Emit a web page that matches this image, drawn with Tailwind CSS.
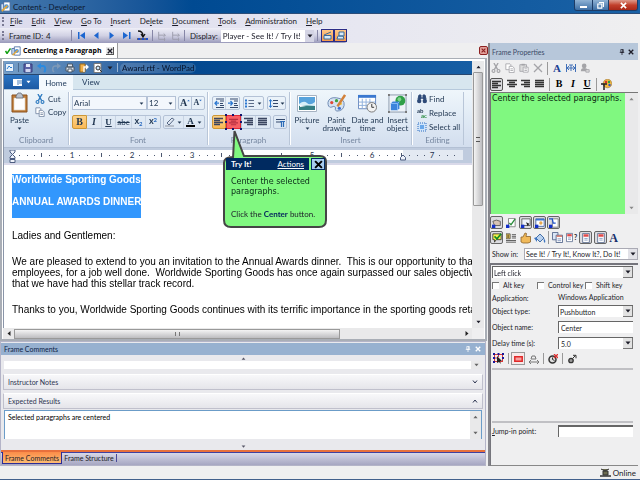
<!DOCTYPE html>
<html lang="en">
<head>
    <meta charset="UTF-8">
    <meta name="viewport" content="width=device-width, initial-scale=1.0">
    <title>Content - Developer</title>
    <script src="https://cdn.jsdelivr.net/npm/@tailwindcss/browser@4"></script>
</head>
<body class="min-h-screen flex flex-col bg-[#efeff0] font-['Lato','Open_Sans',sans-serif] text-[8px] leading-[10px] text-[#1c1c28] overflow-hidden">

    <!-- icon set -->
    <svg class="hidden">
        <symbol id="i-left" viewBox="0 0 10 10"><path d="M0 1.5h9M0 3.5h6M0 5.5h9M0 7.5h6" stroke="currentColor" stroke-width="1.3"/></symbol>
        <symbol id="i-center" viewBox="0 0 10 10"><path d="M0 1.5h10M2 3.5h6M0 5.5h10M2 7.5h6" stroke="currentColor" stroke-width="1.3"/></symbol>
        <symbol id="i-right" viewBox="0 0 10 10"><path d="M0 1.5h9M3 3.5h6M0 5.5h9M3 7.5h6" stroke="currentColor" stroke-width="1.3"/></symbol>
        <symbol id="i-just" viewBox="0 0 10 10"><path d="M0 1.5h9M0 3.5h9M0 5.5h9M0 7.5h9" stroke="currentColor" stroke-width="1.3"/></symbol>
        <symbol id="i-down" viewBox="0 0 6 4"><path d="M.5.5h5L3 3.5z" fill="currentColor"/></symbol>
        <symbol id="i-up" viewBox="0 0 6 4"><path d="M.5 3.5h5L3 .5z" fill="currentColor"/></symbol>
        <symbol id="i-x" viewBox="0 0 8 8"><path d="M1 1l6 6M7 1L1 7" stroke="currentColor" stroke-width="1.8"/></symbol>
        <symbol id="i-pin" viewBox="0 0 8 8"><path d="M2.5.5h3v4h-3zM1 4.500h6M4 4.500V8" fill="none" stroke="currentColor"/><path d="M5 .5v4" stroke="currentColor"/></symbol>
        <symbol id="i-cut" viewBox="0 0 12 12"><path d="M8.500 0L4 8M3.500 0L8 8" stroke="currentColor" stroke-width="1.6"/><circle cx="3" cy="9.500" r="1.700" fill="none" stroke="currentColor" stroke-width="1.400"/><circle cx="9" cy="9.500" r="1.700" fill="none" stroke="currentColor" stroke-width="1.400"/></symbol>
        <symbol id="i-copy" viewBox="0 0 12 12"><path d="M1 1h5l1 1v6H1z" fill="#fff" stroke="currentColor"/><path d="M5 4h4l2 2v5.500H5z" fill="#fff" stroke="currentColor"/><path d="M6.500 7h3M6.500 9h3" stroke="currentColor"/></symbol>
        <symbol id="i-paste" viewBox="0 0 12 12"><path d="M1 2h8v8H1z" fill="#ddd" stroke="currentColor"/><path d="M3 1h4v2H3z" fill="currentColor"/><path d="M5 5h6v6H5z" fill="#fff" stroke="currentColor"/><path d="M6.500 7h3M6.500 9h3" stroke="currentColor"/></symbol>
        <symbol id="i-doc" viewBox="0 0 12 12"><path d="M2 .5h8v11H2z" fill="#fff" stroke="#56688c"/><path d="M3 3h6" stroke="#e04a4a" stroke-width="3"/><path d="M4 6.500h4M4 8.500h4" stroke="#7d93bd"/></symbol>
        <symbol id="i-docs" viewBox="0 0 12 12"><path d="M.5.5h6v8h-6z" fill="#dbe6f6" stroke="#56688c"/><path d="M4.500 3.500h7v8h-7z" fill="#fff" stroke="#56688c"/><path d="M5 4.500h6" stroke="#d66a5a" stroke-width="1.500"/><path d="M6 7.500h4M6 9.500h4" stroke="#7d93bd"/></symbol>
        <symbol id="i-page" viewBox="0 0 12 12"><path d="M3 .5h8v9H3z" fill="#fff" stroke="#4c5c84"/><path d="M5 3h4M5 5h4" stroke="#8aa0c8"/><path d="M2 11l7-7 1.500 1.500L4 12z" fill="#eac36a" stroke="#6d5a2c" stroke-width=".6"/><path d="M0 7h5v5H0z" fill="#1330c8"/></symbol>
        <symbol id="i-hand" viewBox="0 0 12 12"><path d="M1 5h2l2-4 1.500.5L6 4.500h4.500V10L8 11H3L1 10z" fill="#f0b95a" stroke="#8a622a" stroke-width=".8"/></symbol>
        <symbol id="i-tree" viewBox="0 0 12 12"><path d="M2 1v9h8M2 5h8M8 3l2 2-2 2M9 8v4" fill="none" stroke="currentColor" stroke-width="1.100"/></symbol>
        <symbol id="i-frame" viewBox="0 0 12 12"><path d="M1 3h7v7H1z" fill="#cfe2f6" stroke="#44689d"/><path d="M4 1h7v10H4z" fill="#fff" stroke="#44689d"/><circle cx="7" cy="6" r="2.500" fill="#4c93d8"/><path d="M2 11l6-6" stroke="#e6a93a" stroke-width="1.800"/></symbol>
        <symbol id="i-person" viewBox="0 0 12 12"><circle cx="5" cy="3.500" r="2.800" fill="currentColor"/><path d="M1 10q0-4 4-4t5 4z" fill="currentColor"/><path d="M7 8h4v3H7z" fill="#ddd" stroke="currentColor"/></symbol>
    </svg>

    <header>
        <div class="flex h-[14px] items-center bg-linear-to-r from-[#4679ad] via-[#004a92] via-30% to-[#1a62a6] border-b border-[#2b4d79]">
            <svg class="size-[11px] mr-[2px]"><use href="#i-frame"/></svg>
            <h1 class="flex-1 text-[#0c1830]">Content - Developer</h1>
            <div class="self-start flex h-[11px] mr-[2px] rounded-b-[3px] border border-t-0 border-[#1d3c66] overflow-hidden text-white">
                <button aria-label="Minimize" class="w-[18px] bg-linear-to-b from-[#8fb2d4] to-[#3d6fa5] border-r border-[#1d3c66] flex items-center justify-center"><span class="w-[7px] h-[2px] mt-[3px] bg-white"></span></button>
                <button aria-label="Restore" class="w-[16px] bg-linear-to-b from-[#8fb2d4] to-[#3d6fa5] border-r border-[#1d3c66] flex items-center justify-center"><svg class="size-[7px]" viewBox="0 0 7 7"><path d="M2 .5h4.500V5M.8 2h4v4.200h-4z" fill="none" stroke="#fff" stroke-width="1.200"/></svg></button>
                <button aria-label="Close" class="w-[28px] bg-linear-to-b from-[#dc9a8c] via-[#c2402c] to-[#a82818] flex items-center justify-center"><svg class="size-[7px]"><use href="#i-x"/></svg></button>
            </div>
        </div>
        <nav class="flex h-[14px] items-center bg-linear-to-r from-[#dcdcee] via-[#e6e6f1] to-[#efeff0] pl-[2px]">
            <span class="h-[9px] border-l-2 border-dotted border-[#7a7a94] mr-[6px]"></span>
            <div class="flex gap-[9px]">
                <button><u>F</u>ile</button>
                <button><u>E</u>dit</button>
                <button><u>V</u>iew</button>
                <button><u>G</u>o To</button>
                <button><u>I</u>nsert</button>
                <button>De<u>l</u>ete</button>
                <button><u>D</u>ocument</button>
                <button><u>T</u>ools</button>
                <button><u>A</u>dministration</button>
                <button><u>H</u>elp</button>
            </div>
        </nav>
        <div class="flex h-[15px] bg-linear-to-r from-[#e6e6f1] via-[#e6e6f1] to-[#efeff0]">
            <div class="flex items-center w-[347px] pl-[2px] rounded-r-[3px] bg-linear-to-b from-[#eeeef7] via-[#d2d2e4] to-[#9a9abb]">
                <span class="h-[9px] border-l-2 border-dotted border-[#7a7a94] mr-[5px]"></span>
                <span class="w-[37px]">Frame ID:</span><span class="w-[25px]">4</span>
                <span class="h-[11px] border-l border-[#8686a6] mr-[5px]"></span>
                <div class="flex items-center gap-[6px] text-[#1c66d0]">
                    <button aria-label="First frame"><svg class="block size-[9px]" viewBox="0 0 9 9"><path d="M1 1h1.500v7H1zM8 1v7L3 4.500z" fill="currentColor"/></svg></button>
                    <button aria-label="Previous frame"><svg class="block size-[9px]" viewBox="0 0 9 9"><path d="M6.500 1v7L2 4.500z" fill="currentColor"/></svg></button>
                    <button aria-label="Next frame"><svg class="block size-[9px]" viewBox="0 0 9 9"><path d="M2.500 1v7L7 4.500z" fill="currentColor"/></svg></button>
                    <button aria-label="Last frame"><svg class="block size-[9px]" viewBox="0 0 9 9"><path d="M7 1h1.500v7H7zM1 1v7l5-3.500z" fill="currentColor"/></svg></button>
                    <button aria-label="Go to frame"><svg class="block size-[11px]" viewBox="0 0 11 11"><path d="M1 1q5 0 5 5M4 4l2 3 2-3" fill="none" stroke="#111" stroke-width="1.300"/><path d="M0 9h11" stroke="#111"/><path d="M1 8h2v2H1zM5 8h2v2H5zM9 8h2v2H9z" fill="#1c4fd0"/></svg></button>
                </div>
                <span class="h-[11px] border-l border-[#8686a6] mx-[4px]"></span>
                <button aria-label="Jump in" class="text-[#9c9cac]"><svg class="block size-[10px] mr-[4px]"><use href="#i-tree"/></svg></button>
                <button aria-label="Jump out" class="text-[#9c9cac]"><svg class="block size-[10px] mr-[3px]"><use href="#i-tree"/></svg></button>
                <span class="h-[11px] border-l border-[#8686a6] mr-[5px]"></span>
                <label for="display" class="mr-[3px]">Display:</label>
                <div class="relative flex-1 h-[12px] bg-white">
                    <select id="display" class="block appearance-none w-full h-[12px] pl-[2px] outline-none"><option>Player - See It! / Try It!</option></select>
                    <span class="absolute right-0 top-0 h-[12px] w-[9px] bg-[#d4d4e4] flex items-center justify-center pointer-events-none"><svg class="w-[6px] h-[4px]"><use href="#i-down"/></svg></span>
                </div>
                <span class="h-[11px] border-l border-[#8686a6] mx-[3px]"></span>
                <button aria-label="Show recording bar" class="size-[13px] p-[1px] border border-[#2c2c86] bg-linear-to-b from-[#ffc888] to-[#f5994a]"><svg class="block size-[9px]" viewBox="0 0 9 9"><path d="M1 4l7-3M1 4.500h7V8H1z" fill="#d7ebfa" stroke="#3c6c9c"/></svg></button>
                <button aria-label="Show bubble" class="size-[13px] p-[1px] border border-[#2c2c86] bg-linear-to-b from-[#ffc888] to-[#f5994a]"><svg class="block size-[9px]" viewBox="0 0 9 9"><path d="M3 1h5v4H3zM1 8l1-3h5l1 3z" fill="#d7ebfa" stroke="#3c6c9c"/></svg></button>
            </div>
        </div>
    </header>

    <main class="flex-1 grid grid-cols-[1fr_152px]">
        <section class="min-w-0 flex flex-col">
            <div class="flex h-[15px] items-end justify-between">
                <div class="flex items-center h-[15px] bg-white border-r border-[#9a9a9a] pl-[5px] pr-[3px]">
                    <svg class="size-[6px]" viewBox="0 0 6 6"><path d="M.5 3l1.500 2.500L5.500.5" fill="none" stroke="#12a012" stroke-width="1.500"/></svg>
                    <svg class="size-[10px] mr-[2px]"><use href="#i-frame"/></svg>
                    <span class="font-['Open_Sans',sans-serif] text-[7px] font-bold text-black">Centering a Paragraph</span>
                    <button aria-label="Close document" class="ml-[4px] size-[8px] border-r border-b border-[#555] bg-[#e8e8e8] p-[1px]"><svg class="block size-[6px]"><use href="#i-x"/></svg></button>
                </div>
                <button aria-label="Close topic" class="self-center size-[9px] p-[1px] rounded-[2px] border border-[#8c2020] bg-[#e2a09a] text-[#8c2020]"><svg class="block size-[5px]"><use href="#i-x"/></svg></button>
            </div>

            <!-- recorded screen with scroll bars -->
            <div class="grid grid-cols-[1fr_12px] border-2 border-t border-[#a9aeb6] bg-white px-[1px] pt-[2px] mr-[1px]">
                <div class="relative min-w-0 border-l border-[#8a95a8] overflow-hidden">
                    <div class="flex h-[14px] items-center gap-[4px] pl-[1px] bg-linear-to-r from-[#78a0c8] via-[#03488f] via-38% to-[#165ea4] border-b border-[#27466e]">
                        <svg class="size-[9px]" viewBox="0 0 9 9"><path d="M.5.5h8v8h-8z" fill="#e8f2fb" stroke="#5a8ac0"/><path d="M2 6l2-3 2 2 1-1" fill="none" stroke="#2a7fd0"/></svg>
                        <span class="h-[9px] border-l border-[#4a6a90]"></span>
                        <svg class="size-[10px]" viewBox="0 0 10 10"><path d="M1 1h8v8H1z" fill="#5b62a6" stroke="#363c7c"/><path d="M3 1h4v3H3z" fill="#e6e9f8"/><path d="M2.500 6h5v3h-5z" fill="#cfd4ee"/></svg>
                        <svg class="size-[10px]" viewBox="0 0 10 10"><path d="M2 3h4q3 0 2 5l-1 1" fill="none" stroke="#2a8ae0" stroke-width="2"/><path d="M0 3l4-3v6z" fill="#2a8ae0"/></svg>
                        <svg class="size-[10px]" viewBox="0 0 10 10"><path d="M8 3H4q-3 0-2 5l1 1" fill="none" stroke="#7f9ab8" stroke-width="1.500"/><path d="M10 3L6 0v6z" fill="#7f9ab8"/></svg>
                        <svg class="size-[10px]" viewBox="0 0 10 10"><path d="M2.500 1h5v3h-5zM1 4h8v4H1z" fill="#dde4ec" stroke="#4a5868"/><path d="M3 6h4v3H3z" fill="#fff" stroke="#4a5868"/></svg>
                        <svg class="size-[10px]" viewBox="0 0 10 10"><path d="M1 1h5v8H1z" fill="#f1b04a" stroke="#9a6a1a"/><path d="M5 9V4h3M7 2l2 2-2 2" fill="none" stroke="#fff" stroke-width="1.300"/></svg>
                        <svg class="size-[10px]" viewBox="0 0 10 10"><path d="M1 .5h7v9H1z" fill="#fff" stroke="#777"/><circle cx="5" cy="5" r="2" fill="#cde6fa" stroke="#333"/><path d="M6.500 6.500L9 9" stroke="#333"/></svg>
                        <svg class="w-[6px] h-[4px]"><use href="#i-down"/></svg>
                        <span class="h-[9px] border-l border-[#9ab4d0]"></span>
                        <span class="px-[2px] -ml-[2px] rounded-full bg-white/15 text-[#06122a]">Award.rtf - WordPad</span>
                    </div>
                    <div class="flex h-[15px] bg-[#d7e6ef] border-b border-[#b6c9dc] text-[#1c3658]">
                        <button aria-label="WordPad menu" class="w-[35px] bg-linear-to-b from-[#2e76c4] to-[#1c5aa4] text-white flex items-center justify-center gap-[4px]">
                            <svg class="w-[9px] h-[7px]" viewBox="0 0 9 7"><path d="M0 0h9v7H0z" fill="#fff"/><path d="M5 1v5M6 2h3M6 4h3" stroke="#4a82c0"/></svg>
                            <svg class="w-[5px] h-[4px]"><use href="#i-down"/></svg>
                        </button>
                        <button class="w-[34px] bg-[#f4f9fd] h-[15px]">Home</button>
                        <button class="w-[36px]">View</button>
                    </div>

                    <div class="flex h-[58px] bg-linear-to-b from-[#eff6fb] via-[#e0eaf5] to-[#d3deee] text-[#1f3550] border-b border-[#b3c0d4]">
                        <div class="w-[65px] flex flex-col border-r border-[#b9c6d8] my-[2px] shadow-[1px_0_#fff]">
                            <div class="flex-1 flex">
                                <button class="w-[31px] flex flex-col items-center">
                                    <svg class="w-[17px] h-[21px]" viewBox="0 0 17 21"><path d="M1 3h15v17H1z" fill="#c07c36" stroke="#8b5220"/><path d="M3 6h11v12H3z" fill="#fdfdfd" stroke="#d8cdbc" stroke-width=".6"/><path d="M5 4l2-3h3l2 3v2H5z" fill="#b9c1cc" stroke="#59606c" stroke-width=".7"/></svg>
                                    <span class="h-[11px] pt-[2px]">Paste</span>
                                    <svg class="mt-[3px] w-[5px] h-[3px]"><use href="#i-down"/></svg>
                                </button>
                                <div class="flex flex-col gap-[3px] pt-[2px]">
                                    <button class="flex items-center gap-[3px]"><svg class="size-[10px] text-[#2f7bc0]"><use href="#i-cut"/></svg>Cut</button>
                                    <button class="flex items-center gap-[3px]"><svg class="size-[10px] text-[#7184a0]"><use href="#i-copy"/></svg>Copy</button>
                                </div>
                            </div>
                            <div class="text-center text-[#7687a0]">Clipboard</div>
                        </div>
                        <div class="w-[139px] flex flex-col border-r border-[#b9c6d8] my-[2px] shadow-[1px_0_#fff]">
                            <div class="flex-1 flex flex-col gap-[5px] pl-[3px] pt-[4px]">
                                <div class="flex h-[14px]">
                                    <div class="relative w-[75px] border border-[#b4c2d6] bg-[#f3f7fc]">
                                        <select aria-label="Font" class="block appearance-none w-full h-[12px] pl-[1px] outline-none"><option>Arial</option></select>
                                        <svg class="absolute right-[2px] top-[5px] w-[5px] h-[3px] pointer-events-none"><use href="#i-down"/></svg>
                                    </div>
                                    <div class="relative w-[29px] border border-[#b4c2d6] bg-[#f3f7fc]">
                                        <select aria-label="Font size" class="block appearance-none w-full h-[12px] pl-[1px] outline-none"><option>12</option></select>
                                        <svg class="absolute right-[2px] top-[5px] w-[5px] h-[3px] pointer-events-none"><use href="#i-down"/></svg>
                                    </div>
                                    <div class="ml-[2px] flex border border-[#b4c2d6] rounded-[2px] font-['Liberation_Serif',serif] font-bold">
                                        <button aria-label="Grow font" class="w-[13px] text-[10px] flex items-center justify-center border-r border-[#b4c2d6]">A<svg class="w-[3px] h-[3px] mb-[5px] text-[#2c6cc0]"><use href="#i-up"/></svg></button>
                                        <button aria-label="Shrink font" class="w-[12px] text-[8px] flex items-center justify-center">A<svg class="w-[3px] h-[3px] mb-[5px] text-[#2c6cc0]"><use href="#i-down"/></svg></button>
                                    </div>
                                </div>
                                <div class="flex h-[14px] font-['Liberation_Serif',serif] text-[9px]">
                                    <button class="w-[15px] font-bold text-[10px] border border-[#cb9738] bg-linear-to-b from-[#fbd28a] to-[#fbb954] rounded-l-[2px]">B</button>
                                    <div class="flex border border-l-0 border-[#b4c2d6] rounded-r-[2px] mr-[2px]">
                                        <button class="w-[14px] font-bold italic text-[10px]">I</button>
                                        <button class="w-[15px] font-bold underline border-x border-[#c8d4e4]">U</button>
                                        <button class="w-[16px] font-['Lato',sans-serif] text-[8px] line-through border-r border-[#c8d4e4]">abc</button>
                                        <button class="w-[14px] font-['Lato',sans-serif] font-bold border-r border-[#c8d4e4] flex justify-center">x<span class="text-[6px] leading-[16px] text-[#2c6cc0]">2</span></button>
                                        <button class="w-[14px] font-['Lato',sans-serif] font-bold flex justify-center">x<span class="text-[6px] leading-[7px] text-[#2c6cc0]">2</span></button>
                                    </div>
                                    <div class="flex border border-[#b4c2d6] rounded-[2px]">
                                        <button aria-label="Highlight" class="w-[20px] flex items-center justify-center gap-[2px] border-r border-[#c8d4e4]"><svg class="size-[10px]" viewBox="0 0 10 10"><path d="M2 6l5-5 2 1.500L4 8z" fill="#dfe7f2" stroke="#485a78" stroke-width=".9"/><path d="M0 9h9" stroke="#a8b0bc" stroke-width="1.500"/></svg><svg class="w-[5px] h-[3px]"><use href="#i-down"/></svg></button>
                                        <button aria-label="Text colour" class="w-[20px] flex items-center justify-center gap-[2px] font-bold"><span class="border-b-2 border-black leading-[8px] px-[1px]">A</span><svg class="w-[5px] h-[3px]"><use href="#i-down"/></svg></button>
                                    </div>
                                </div>
                            </div>
                            <div class="text-center text-[#7687a0]">Font</div>
                        </div>
                        <div class="w-[82px] flex flex-col border-r border-[#b9c6d8] my-[2px] shadow-[1px_0_#fff]">
                            <div class="flex-1 flex flex-col gap-[5px] pl-[4px] pt-[4px]">
                                <div class="flex h-[14px] gap-[3px]">
                                    <div class="flex border border-[#b4c2d6] rounded-[2px]">
                                        <button aria-label="Decrease indent" class="w-[13px] flex items-center justify-center border-r border-[#c8d4e4]"><svg class="size-[10px]" viewBox="0 0 10 10"><path d="M2 1h8M6 3h4M6 5.500h3M6 7.500h4M2 9.500h8" stroke="#34496c"/><path d="M5 5.200H1M3 3L1 5.200 3 7.500" fill="none" stroke="#2c78d0" stroke-width="1.300"/></svg></button>
                                        <button aria-label="Increase indent" class="w-[13px] flex items-center justify-center"><svg class="size-[10px]" viewBox="0 0 10 10"><path d="M2 1h8M6 3h4M6 5.500h3M6 7.500h4M2 9.500h8" stroke="#34496c"/><path d="M0 5.200h4M2.500 3l2 2.200-2 2.300" fill="none" stroke="#2c78d0" stroke-width="1.300"/></svg></button>
                                    </div>
                                    <button aria-label="Start a list" class="w-[21px] flex items-center justify-center gap-[3px] border border-[#b4c2d6] rounded-[2px]"><svg class="size-[9px]" viewBox="0 0 9 9"><path d="M0 1.500h2M0 4.500h2M0 7.500h2" stroke="#2c78d0" stroke-width="1.800"/><path d="M3.500 1.500H9M3.500 4.500H9M3.500 7.500H9" stroke="#5b6c88"/></svg><svg class="w-[5px] h-[3px]"><use href="#i-down"/></svg></button>
                                    <button aria-label="Line spacing" class="w-[19px] flex items-center justify-center gap-[2px] border border-[#b4c2d6] rounded-[2px]"><svg class="size-[9px]" viewBox="0 0 9 9"><path d="M1.500 1v7M0 2.500L1.500.5 3 2.500M0 6.500l1.500 2 1.500-2" fill="none" stroke="#2c78d0"/><path d="M4 1.500h5M4 4.500h5M4 7.500h5" stroke="#34496c" stroke-width="1.200"/></svg><svg class="w-[5px] h-[3px]"><use href="#i-down"/></svg></button>
                                </div>
                                <div class="flex h-[14px] text-[#3a4560]">
                                    <button aria-label="Align left" class="w-[14px] flex items-center justify-center border border-[#cb9738] bg-linear-to-b from-[#fbd28a] to-[#fbb954] rounded-l-[2px]"><svg class="size-[10px]"><use href="#i-left"/></svg></button>
                                    <button aria-label="Center" class="relative w-[15px] flex items-center justify-center bg-[#f75f65] text-[#b83040]">
                                        <svg class="size-[9px]"><use href="#i-center"/></svg>
                                        <svg class="absolute -inset-[1px] w-[17px] h-[16px]" viewBox="0 0 17 16"><path d="M1.500 1.500h14v13h-14z" fill="none" stroke="#e02834"/><path d="M0 0h2v2H0zM7 0h2v2H7zM15 0h2v2h-2zM0 7h2v2H0zM15 7h2v2h-2zM0 14h2v2H0zM7 14h2v2H7zM15 14h2v2h-2z" fill="#15156e"/></svg>
                                    </button>
                                    <div class="flex border border-[#b4c2d6] rounded-r-[2px]">
                                        <button aria-label="Align right" class="w-[14px] flex items-center justify-center border-r border-[#c8d4e4]"><svg class="size-[10px]"><use href="#i-right"/></svg></button>
                                        <button aria-label="Justify" class="w-[14px] flex items-center justify-center"><svg class="size-[10px]"><use href="#i-just"/></svg></button>
                                    </div>
                                    <button aria-label="Paragraph" class="w-[14px] ml-[2px] flex items-center justify-center border border-[#b4c2d6] rounded-[2px]"><svg class="size-[9px]" viewBox="0 0 9 9"><path d="M0 1.500h9M0 4h5" stroke="#34496c"/><path d="M5.500 9V3.500M7.500 9V3.500M4 3.500h5" stroke="#2c6cb8" stroke-width="1.200"/></svg></button>
                                </div>
                            </div>
                            <div class="text-center text-[#7687a0]">Paragraph</div>
                        </div>
                        <div class="w-[122px] flex flex-col border-r border-[#b9c6d8] my-[2px] shadow-[1px_0_#fff]">
                            <div class="flex-1 grid grid-cols-[32px_27px_35px_25px] pl-[1px] pt-[2px] leading-[8px]">
                                <button class="flex flex-col items-center"><svg class="w-[20px] h-[19px] mb-[3px]" viewBox="0 0 20 19"><path d="M.5 1.500h19v16H.5z" fill="#fff" stroke="#a5b2c2"/><path d="M2 3h16v13H2z" fill="#58a3dc"/><path d="M2 10q5-4 8-1t8-1v4H2z" fill="#d8f0fa"/><path d="M2 12q8-1 16 0v4H2z" fill="#357f84"/><path d="M3 11l6 1-6 1z" fill="#fff"/></svg>Picture<svg class="mt-[3px] w-[5px] h-[3px]"><use href="#i-down"/></svg></button>
                                <button class="flex flex-col items-center"><svg class="size-[19px] mb-[3px]" viewBox="0 0 20 20"><path d="M1 9q1-6 9-5 9 1 8 8-1 6-8 6-2-1-1-4-1-2-5 0-3 0-3-5z" fill="#d4e2f3" stroke="#6a87b0"/><circle cx="5" cy="9" r="1.700" fill="#e04838"/><circle cx="10" cy="7" r="1.700" fill="#3ca03c"/><circle cx="14" cy="10" r="1.700" fill="#f0c030"/><circle cx="13" cy="15" r="1.700" fill="#3a6cd0"/><path d="M19 1l-8 12" stroke="#d2813a" stroke-width="2.600"/></svg>Paint drawing</button>
                                <button class="flex flex-col items-center"><svg class="size-[19px] mb-[3px]" viewBox="0 0 20 20"><path d="M.5 1.500h18v14H.5z" fill="#fff" stroke="#6a8ac0"/><path d="M0 1h19v3H0z" fill="#3a78d0"/><path d="M4.500 5v10M8.500 5v10M12.500 5v10M1 8.500h17M1 12h17" stroke="#8fb0dc"/><circle cx="14.500" cy="14" r="5" fill="#f3f3f3" stroke="#777"/><path d="M14.500 10.500V14H17" fill="none" stroke="#333"/></svg>Date and time</button>
                                <button class="flex flex-col items-center"><svg class="size-[19px] mb-[3px]" viewBox="0 0 20 20"><path d="M1 1h18v18H1z" fill="#eef3f9" stroke="#8a98ac"/><circle cx="13" cy="7" r="5.200" fill="#2fa048"/><circle cx="12" cy="5.500" r="2" fill="#7cd48a"/><path d="M3 10l2-2h7v7l-2 2H3z" fill="#3c84dc"/><path d="M3 10h7v7M10 10l2-2" fill="none" stroke="#88bcf4"/><path d="M0 0h2v2H0zM18 0h2v2h-2zM0 18h2v2H0zM18 18h2v2h-2z" fill="#777"/></svg>Insert object</button>
                            </div>
                            <div class="text-center text-[#7687a0]">Insert</div>
                        </div>
                        <div class="w-[52px] flex flex-col border-r border-[#b9c6d8] my-[2px]">
                            <div class="flex-1 flex flex-col gap-[4px] pl-[5px] pt-[2px]">
                                <button class="flex items-center gap-[2px]"><svg class="size-[10px]" viewBox="0 0 10 10"><path d="M1 5l1-4h2v4M6 5V1h2l1 4M4 4h2" fill="#2e4a78" stroke="#2e4a78"/><circle cx="2.200" cy="7" r="2.200" fill="#2e4a78"/><circle cx="7.800" cy="7" r="2.200" fill="#2e4a78"/></svg>Find</button>
                                <button class="flex items-center gap-[2px]"><span class="w-[10px] h-[10px] text-[6px] leading-[5px] font-bold text-left">ab<span class="block text-right text-[#268a3c]">ac</span></span>Replace</button>
                                <button class="flex items-center gap-[2px] whitespace-nowrap"><svg class="size-[10px] shrink-0" viewBox="0 0 10 10"><path d="M1 1h8v8H1z" fill="#cfe4fa" stroke="#2c6cc0" stroke-dasharray="1 1"/><path d="M3 3h4v4H3z" fill="#6aa8ea"/></svg>Select all</button>
                            </div>
                            <div class="text-center text-[#7687a0]">Editing</div>
                        </div>
                    </div>

                    <div class="h-[17px] bg-[#bfcbde] border-b-2 border-[#d9d9e9] pt-[2px]">
                        <svg class="block w-full h-[13px]">
                            <defs><pattern id="ticks" x="8" width="60" height="13" patternUnits="userSpaceOnUse"><path d="M7 5h1v1H7zM15 5h1v1h-1zM22 5h1v1h-1zM29 3h1v4h-1zM37 5h1v1h-1zM45 5h1v1h-1zM52 5h1v1h-1z" fill="#4c5870"/></pattern></defs>
                            <rect x="8" width="391" height="10" fill="#fff"/><rect x="399" width="60" height="10" fill="#e3e9f2"/>
                            <rect x="8" width="448" height="10" fill="url(#ticks)"/>
                            <g fill="#26344e" text-anchor="middle" font-size="8"><text x="68" y="8">1</text><text x="128" y="8">2</text><text x="188" y="8">3</text><text x="308" y="8">5</text><text x="368" y="8">6</text><text x="428" y="8">7</text></g>
                            <path d="M6 0h5v2L8.500 4.500 6 2zM6 8.500V7l2.500-2.500L11 7v1.500zM6 9.500h5v3H6z" fill="#eef2fa" stroke="#4c5c80"/><path d="M396.500 10V7.500L399 5l2.500 2.500V10z" fill="#eef2fa" stroke="#4c5c80"/>
                        </svg>
                    </div>

                    <article class="h-[163px] pl-[8px] pt-[9px] font-['Liberation_Sans',Arial,sans-serif] text-[10px] leading-[11px] text-black overflow-hidden">
                        <div class="w-fit bg-[#3297fd] text-white font-bold h-[44px]">
                            <h2 class="pb-[11px]">Worldwide Sporting Goods</h2>
                            <h2>ANNUAL AWARDS DINNER</h2>
                        </div>
                        <p class="mt-[12px]">Ladies and Gentlemen:</p>
                        <p class="mt-[15px] whitespace-pre">We are pleased to extend to you an invitation to the Annual Awards dinner.  This is our opportunity to thank you, our
employees, for a job well done.  Worldwide Sporting Goods has once again surpassed our sales objectives. It is
that we have had this stellar track record.</p>
                        <p class="mt-[15px] whitespace-pre">Thanks to you, Worldwide Sporting Goods continues with its terrific importance in the sporting goods retail industry.</p>
                    </article>

                    <!-- Try It! bubble, points at the Center button -->
                    <div class="absolute left-[218px] top-[69px] w-[107px] h-[100px]">
                        <svg class="absolute inset-0 size-full" viewBox="0 0 107 100"><path d="M11 28L12.500 1 22 26H98q6 0 6 6V90q0 7-7 7H9q-7 0-7-7V33q0-6 9-6z" fill="#80f880" stroke="#454545" stroke-width="2"/></svg>
                        <div class="relative pt-[28px] px-[4px]">
                            <div class="flex h-[12px] text-white">
                                <div class="flex-1 flex items-center justify-between bg-[#002a60] pl-[5px] pr-[5px] mr-[2px]"><b>Try It!</b><a href="#" class="underline">Actions</a></div>
                                <button aria-label="Close bubble" class="w-[14px] flex items-center justify-center bg-[#a8cdf0] text-black border border-[#002a60]"><svg class="size-[9px]"><use href="#i-x"/></svg></button>
                            </div>
                            <p class="pl-[5px] pt-[7px] font-['DejaVu_Sans',sans-serif] text-[#0a2a18]">Center the selected paragraphs.</p>
                            <p class="pl-[5px] pt-[12px] whitespace-nowrap">Click the <b class="text-[#00205c]">Center</b> button.</p>
                        </div>
                    </div>
                </div>
                <div class="flex flex-col justify-between items-center bg-[#e9e9ea] py-[4px]">
                    <svg class="w-[5px] h-[4px]"><use href="#i-up"/></svg>
                    <span class="w-[10px] flex-1 mt-[3px] mb-[114px] flex items-center justify-center rounded-[1px] border border-[#999] bg-linear-to-r from-[#f4f4f4] to-[#bdbdc0]"><span class="w-[4px] h-[5px] border-y border-[#555]"></span></span>
                    <svg class="w-[5px] h-[4px]"><use href="#i-down"/></svg>
                </div>
                <div class="h-[11px] flex items-center bg-[#e9e9ea] pl-[4px]">
                    <svg class="w-[4px] h-[5px]" viewBox="0 0 4 5"><path d="M3.500 0v5L.5 2.500z" fill="#222"/></svg>
                    <span class="h-[10px] flex-1 ml-[3px] mr-[125px] flex items-center justify-center border border-[#999] bg-linear-to-b from-[#f4f4f4] to-[#bdbdc0]"><span class="w-[5px] h-[4px] border-x border-[#777]"></span></span>
                    <svg class="w-[4px] h-[5px] mr-[3px]" viewBox="0 0 4 5"><path d="M.5 0v5l3-2.500z" fill="#222"/></svg>
                </div>
                <div class="bg-[#efeff0]"></div>
            </div>

            <!-- frame comments -->
            <section class="mr-[2px] flex-1 flex flex-col border border-[#b4b4c8] bg-[#e9e9ed] text-[7px]">
                <div class="flex items-center h-[12px] mt-[1px] bg-[#97b1d0] pl-[3px] pr-[4px] text-white">
                    <h2 class="flex-1 text-[#0d2245]">Frame Comments</h2>
                    <button aria-label="Pin comments" class="mr-[4px]"><svg class="block size-[6px]"><use href="#i-pin"/></svg></button>
                    <button aria-label="Close comments"><svg class="block size-[6px]"><use href="#i-x"/></svg></button>
                </div>
                <div class="h-[6px] flex items-center justify-center text-[#556]"><svg class="w-[5px] h-[3px]"><use href="#i-up"/></svg></div>
                <div class="h-[8px] mx-[3px] bg-white flex justify-end"><span class="w-[11px] bg-[#e9e9ea] flex items-center justify-center text-[#666]"><svg class="w-[5px] h-[4px]"><use href="#i-down"/></svg></span></div>
                <button class="mt-[5px] mx-[2px] h-[16px] pl-[4px] pr-[4px] flex items-center justify-between border border-t-[#fff] border-[#c0c0cc] bg-linear-to-b from-[#f8f8fa] to-[#e5e5ea] text-[#2c3450]">Instructor Notes<svg class="size-[6px]" viewBox="0 0 6 6"><path d="M1 1.500l2 2.500 2-2.500" fill="none" stroke="currentColor"/></svg></button>
                <button class="mt-[3px] mx-[2px] h-[16px] pl-[4px] pr-[4px] flex items-center justify-between border border-t-[#fff] border-[#c0c0cc] bg-linear-to-b from-[#f8f8fa] to-[#e5e5ea] text-[#2c3450]">Expected Results<svg class="size-[6px]" viewBox="0 0 6 6"><path d="M1 4.500L3 2l2 2.500" fill="none" stroke="currentColor"/></svg></button>
                <div class="mt-[1px] mx-[3px] h-[29px] flex border border-b-0 border-[#6b9cc8] bg-white">
                    <textarea id="results" aria-label="Expected Results" class="flex-1 resize-none outline-none pl-[3px] pt-[1px] overflow-hidden text-black">Selected paragraphs are centered</textarea>
                    <div class="w-[11px] bg-[#e9e9ea] flex flex-col items-center justify-between py-[4px] text-[#666]"><svg class="w-[5px] h-[4px]"><use href="#i-up"/></svg><svg class="w-[5px] h-[4px]"><use href="#i-down"/></svg></div>
                </div>
                <div class="flex-1 flex items-center justify-center text-[#556]"><svg class="w-[5px] h-[3px] mt-[4px]"><use href="#i-down"/></svg></div>
                <div class="h-[15px] flex border-t-2 border-[#e8703c] shadow-[inset_0_1px_#4040a0] bg-linear-to-b from-[#dcdcea] to-[#a6a6c2]">
                    <button class="w-[60px] ml-[1px] h-[12px] border border-t-0 border-[#2c2c96] bg-linear-to-b from-[#fb8c48] to-[#fcbc74] whitespace-nowrap">Frame Comments</button>
                    <button class="w-[54px] h-[12px] whitespace-nowrap">Frame Structure</button>
                    <span class="h-[8px] mt-[2px] border-l border-[#4a4a9a]"></span>
                </div>
            </section>
        </section>

        <!-- frame properties -->
        <aside class="flex flex-col border-l-2 border-[#85858c] bg-[#efeff0] pr-[2px] text-[7px]">
            <div class="flex items-center h-[17px] bg-[#b7c7da] pl-[2px] pr-[4px]">
                <h2 class="flex-1 text-[#3c4c68]">Frame Properties</h2>
                <button aria-label="Pin properties" class="mr-[3px]"><svg class="block size-[6px]"><use href="#i-pin"/></svg></button>
                <button aria-label="Close properties"><svg class="block size-[6px]"><use href="#i-x"/></svg></button>
            </div>
            <div class="flex items-center h-[16px] gap-[4px] pl-[1px] text-[#a4a4a8]">
                <button aria-label="Cut"><svg class="block size-[10px]"><use href="#i-cut"/></svg></button>
                <button aria-label="Copy"><svg class="block size-[10px]"><use href="#i-copy"/></svg></button>
                <button aria-label="Paste"><svg class="block size-[10px]"><use href="#i-paste"/></svg></button>
                <button aria-label="Delete"><svg class="block size-[10px]" viewBox="0 0 10 10"><path d="M1 1l8 8M9 1L1 9" stroke="currentColor" stroke-width="1.300"/></svg></button>
                <span class="h-[13px] border-l border-[#999]"></span>
                <button aria-label="Font" class="w-[10px] font-['Liberation_Serif',serif] text-[11px] font-bold text-[#1c3f94]">A</button>
                <button aria-label="Text width"><svg class="block size-[10px]" viewBox="0 0 10 10"><path d="M.5 1v8M9.500 1v8M1 5h8M3 3L1 5l2 2M7 3l2 2-2 2M3 2h4M5 2v6" fill="none" stroke="#4270b8"/></svg></button>
                <button aria-label="Link"><svg class="block size-[10px]"><use href="#i-person"/></svg></button>
            </div>
            <div class="flex items-center h-[16px] gap-[4px] text-[#333]">
                <button aria-label="Align text left" class="size-[13px] p-[1px] border border-[#555] rounded-[2px] bg-[#dcdce0]"><svg class="block size-[10px]"><use href="#i-left"/></svg></button>
                <button aria-label="Align text center"><svg class="block size-[10px]"><use href="#i-center"/></svg></button>
                <button aria-label="Align text right"><svg class="block size-[10px]"><use href="#i-right"/></svg></button>
                <button aria-label="Justify text"><svg class="block size-[10px]"><use href="#i-just"/></svg></button>
                <span class="h-[13px] border-l border-[#999]"></span>
                <div class="flex gap-[4px] font-['Liberation_Serif',serif] text-[10px] font-bold text-black">
                    <button class="w-[10px]">B</button><button class="w-[10px] italic">I</button><button class="w-[10px] underline">U</button>
                </div>
                <span class="h-[13px] border-l border-[#999]"></span>
                <button aria-label="Bubble colour"><svg class="block size-[11px]" viewBox="0 0 11 11"><circle cx="6.500" cy="4.500" r="4.300" fill="#f5b83c" stroke="#8c6420" stroke-width=".5"/><circle cx="5" cy="3" r="1.200" fill="#d63030"/><circle cx="8" cy="3" r="1.200" fill="#2c9a3c"/><circle cx="8.500" cy="6" r="1.200" fill="#2c50d0"/><path d="M0 5h6M3 5v6" stroke="#222" stroke-width="1.500"/></svg></button>
            </div>
            <div class="h-[122px] flex border-t border-l border-[#777]">
                <textarea aria-label="Bubble text" class="flex-1 min-w-0 resize-none outline-none overflow-hidden bg-[#80f880] pl-[1px] pt-px font-['DejaVu_Sans',sans-serif] text-[8px] whitespace-nowrap text-[#0a2a10]">Center the selected paragraphs.</textarea>
                <div class="w-[13px] bg-[#e9e9ea] flex flex-col items-center justify-between py-[4px] text-[#888]"><svg class="w-[5px] h-[4px]"><use href="#i-up"/></svg><svg class="w-[5px] h-[4px]"><use href="#i-down"/></svg></div>
            </div>
            <div class="flex items-center h-[16px] gap-[1px] pt-px">
                <button aria-label="Lead-in" class="size-[13px] p-[1px] border border-[#666] rounded-[2px] bg-[#dcdce0]"><svg class="block size-[10px]" viewBox="0 0 12 12"><path d="M1 4q4-3 9 0v5H3z" fill="#d8c4b4" stroke="#555"/><path d="M0 8h4v4H0z" fill="#1330c8"/></svg></button>
                <button aria-label="Edit note" class="size-[14px] p-[2px]"><svg class="block size-[10px]" viewBox="0 0 12 12"><path d="M3 .5h8v10H3z" fill="#fff" stroke="#777"/><path d="M4 6l2 2 5-7" fill="none" stroke="#2c8c3c" stroke-width="1.500"/><path d="M0 8h4v4H0z" fill="#1330c8"/></svg></button>
                <button aria-label="Screen" class="size-[13px] p-[1px] border border-[#666] rounded-[2px] bg-[#dcdce0]"><svg class="block size-[10px]" viewBox="0 0 12 12"><path d="M1 1h10v8H1z" fill="#eef2fa" stroke="#555"/><path d="M6 5l4 2-2 3z" fill="#222"/><path d="M0 8h4v4H0z" fill="#1330c8"/></svg></button>
                <button aria-label="Preview" class="size-[13px] p-[1px] border border-[#666] rounded-[2px] bg-[#dcdce0]"><svg class="block size-[10px]" viewBox="0 0 12 12"><path d="M1 1h10v9H1z" fill="#fff" stroke="#3c5ca0"/><path d="M1 2h10" stroke="#3c74d0" stroke-width="2"/><circle cx="7" cy="6" r="2" fill="#e8a850"/><path d="M0 8h4v4H0z" fill="#1330c8"/></svg></button>
                <button aria-label="Document" class="size-[13px] p-[1px] border border-[#666] rounded-[2px] bg-[#dcdce0]"><svg class="block size-[10px]" viewBox="0 0 12 12"><path d="M4 1h7v10H4z" fill="#fff" stroke="#777"/><path d="M0 1h4l1 5h3" fill="none" stroke="#1c50c8" stroke-width="1.500"/><path d="M0 8h4v4H0z" fill="#1330c8"/></svg></button>
            </div>
            <div class="flex items-center h-[15px] gap-[2px]">
                <button aria-label="Bubble on" class="size-[13px] p-[1px] border border-[#666] rounded-[2px] bg-[#dcdce0]"><svg class="block size-[10px]" viewBox="0 0 12 12"><path d="M1 1h10v7H5l-2 3V8H1z" fill="#f7f04c" stroke="#333"/><path d="M3 4l3 3 5-6" fill="none" stroke="#128c22" stroke-width="2"/></svg></button>
                <button aria-label="Bubble text source" class="ml-[1px]"><svg class="block size-[10px]" viewBox="0 0 12 12"><path d="M0 1h5v6H0z" fill="#e8c050" stroke="#555"/><path d="M2.500 2v4" stroke="#222"/><path d="M7 2h5M7 4h5M7 6h5M0 9h12M0 11h12" stroke="#444"/></svg></button>
                <button aria-label="Pointer" class="ml-[2px]"><svg class="block size-[12px]"><use href="#i-hand"/></svg></button>
                <button aria-label="Fill"><svg class="block size-[12px]" viewBox="0 0 12 12"><path d="M2 6l4-4 4 4-4 4z" fill="#b8d0ee" stroke="#4470a8"/><path d="M10 6q2 3 1 5-2-1-1-5zM0 6l3-1v5z" fill="#3c74c0"/></svg></button>
                <span class="h-[13px] border-l border-[#999]"></span>
                <button aria-label="Copy frame" class="pl-[1px]"><svg class="block size-[11px]"><use href="#i-docs"/></svg></button>
                <button aria-label="Frame help" class="flex font-bold"><svg class="block w-[9px] h-[11px]"><use href="#i-doc"/></svg>?</button>
                <button aria-label="Frame" class="size-[13px] p-[1px] border border-[#666] rounded-[2px] bg-[#dcdce0]"><svg class="block size-[10px]"><use href="#i-doc"/></svg></button>
                <button aria-label="Frame down" class="size-[13px] p-[1px] border border-[#666] rounded-[2px] bg-[#dcdce0]"><svg class="block size-[10px]"><use href="#i-doc"/></svg></button>
                <button aria-label="Text style" class="font-['Liberation_Serif',serif] text-[12px] font-bold text-[#16306c]">A</button>
            </div>
            <div class="flex items-center h-[18px] pl-[2px]">
                <label for="showin" class="w-[32px] whitespace-nowrap">Show in:</label>
                <div class="relative flex-1 min-w-0 h-[12px] border border-[#aaaab4] bg-white">
                    <select id="showin" class="block appearance-none w-full h-[10px] pl-[1px] outline-none"><option>See It! / Try It!, Know It?, Do It!</option></select>
                    <span class="absolute right-0 top-0 h-[10px] w-[9px] bg-[#e2e2e8] flex items-center justify-center pointer-events-none"><svg class="w-[6px] h-[4px]"><use href="#i-down"/></svg></span>
                </div>
            </div>

            <div class="flex-1 border-t-2 border-l border-[#75757c] border-b border-b-[#888] pl-[1px] pr-[5px] pt-[1px]">
                <div class="relative h-[12px] border-t border-l border-[#666] bg-white">
                    <select aria-label="Action" class="block appearance-none w-full h-[11px] pl-[1px] outline-none"><option>Left click</option></select>
                    <span class="absolute right-0 top-0 h-[11px] w-[10px] bg-[#e2e2e2] border-r border-b border-[#777] flex items-center justify-center pointer-events-none"><svg class="w-[6px] h-[4px]"><use href="#i-down"/></svg></span>
                </div>
                <div class="grid grid-cols-[45px_48px_1fr] items-center h-[14px] whitespace-nowrap">
                    <label class="flex items-center gap-[4px]"><input type="checkbox" class="appearance-none shrink-0 size-[7px] border-t border-l border-[#777] bg-white">Alt key</label>
                    <label class="flex items-center gap-[4px]"><input type="checkbox" class="appearance-none shrink-0 size-[7px] border-t border-l border-[#777] bg-white">Control key</label>
                    <label class="flex items-center gap-[4px]"><input type="checkbox" class="appearance-none shrink-0 size-[7px] border-t border-l border-[#777] bg-white">Shift key</label>
                </div>
                <div class="grid grid-cols-[66px_1fr] items-center gap-y-[2px] whitespace-nowrap">
                    <span>Application:</span><span class="h-[11px]">Windows Application</span>
                    <label for="otype">Object type:</label>
                    <div class="relative h-[12px] border-t border-l border-[#666] bg-white">
                        <select id="otype" class="block appearance-none w-full h-[11px] pl-[1px] outline-none"><option>Pushbutton</option></select>
                        <span class="absolute right-0 top-0 h-[11px] w-[10px] bg-[#e2e2e2] border-r border-b border-[#777] flex items-center justify-center pointer-events-none"><svg class="w-[6px] h-[4px]"><use href="#i-down"/></svg></span>
                    </div>
                    <label for="oname">Object name:</label>
                    <input id="oname" type="text" value="Center" class="my-[2px] w-full min-w-0 h-[12px] pl-[2px] border-t border-l border-[#666] bg-white outline-none">
                    <label for="delay">Delay time (s):</label>
                    <div class="relative h-[12px] border-t border-l border-[#666] bg-white">
                        <select id="delay" class="block appearance-none w-full h-[11px] pl-[2px] outline-none"><option>5.0</option></select>
                        <span class="absolute right-0 top-0 h-[11px] w-[10px] bg-[#e2e2e2] border-r border-b border-[#777] flex items-center justify-center pointer-events-none"><svg class="w-[6px] h-[4px]"><use href="#i-down"/></svg></span>
                    </div>
                </div>
                <div class="flex items-center gap-[4px] pl-[1px] py-[2px] my-[1px]">
                    <button aria-label="Action area"><svg class="block size-[11px]" viewBox="0 0 11 11"><path d="M1 1.500h9M1 8.500h9M1.500 1v8M9.500 1v8M5.500 1v3M1 5h3" stroke="#d83838"/><path d="M0 0h2v2H0zM4.500 0h2v2h-2zM9 0h2v2H9zM0 4h2v2H0zM0 8h2v2H0zM9 4h2v2H9z" fill="#18189a"/><path d="M4 3l5 5H7l1 3-2-2-2 1z" fill="#222"/></svg></button>
                    <span class="h-[11px] border-l border-[#999]"></span>
                    <button aria-label="Rectangle" class="-ml-[2px] w-[14px] h-[13px] flex items-center justify-center border border-[#999] bg-[#f8e8e8]"><svg class="w-[9px] h-[6px]" viewBox="0 0 9 6"><path d="M.8.8h7.400v4.400H.8z" fill="#f7a0a0" stroke="#e02828" stroke-width="1.500"/></svg></button>
                    <button aria-label="Move"><svg class="block size-[10px]" viewBox="0 0 10 10"><path d="M2 5l1-3h3l1 3zM0 8h10M2 6L0 8l2 2M8 6l2 2-2 2" fill="none" stroke="#777"/></svg></button>
                    <span class="h-[11px] border-l border-[#999]"></span>
                    <button aria-label="No context"><svg class="block size-[10px]" viewBox="0 0 10 10"><circle cx="4.500" cy="5.500" r="3.500" fill="#ddd" stroke="#333" stroke-width="1.500"/><path d="M4.500 3.500v2l2 1" fill="none" stroke="#333"/><path d="M6 0l4 4M10 0L6 4" stroke="#e03030" stroke-width="1.300"/></svg></button>
                    <span class="h-[11px] border-l border-[#999]"></span>
                    <button aria-label="Branch"><svg class="block size-[10px]" viewBox="0 0 10 10"><circle cx="4" cy="6.500" r="2.200" fill="#999" stroke="#333" stroke-width="1.300"/><path d="M5.500 4.500L8.500 1.500M6 1.300h3v3" fill="none" stroke="#333"/></svg></button>
                </div>
                <div class="border-t-2 border-[#c0c0c4] h-[53px]"></div>
                <div class="border-t-2 border-[#c0c0c4] pt-[2px] grid grid-cols-[66px_1fr] items-center whitespace-nowrap">
                    <label for="jump"><u>J</u>ump-in point:</label>
                    <input id="jump" type="text" class="w-full min-w-0 h-[12px] border-t-2 border-l border-[#666] bg-white outline-none">
                </div>
            </div>
        </aside>
    </main>

    <footer class="flex items-center justify-end gap-[2px] h-[14px] pr-[4px] bg-[#efeff0] border-b border-[#42608c]">
        <svg class="w-[11px] h-[9px]" viewBox="0 0 11 9"><path d="M1 1l4 2 4-2M3 3h5v4H3z" fill="#6b6b50" stroke="#333"/><path d="M0 8h11" stroke="#333" stroke-width="1.500"/></svg>
        <span>Online</span>
    </footer>

    <script>
        const results = document.getElementById('results');
        results.focus();
        results.setSelectionRange(results.value.length, results.value.length);
    </script>
</body>
</html>
